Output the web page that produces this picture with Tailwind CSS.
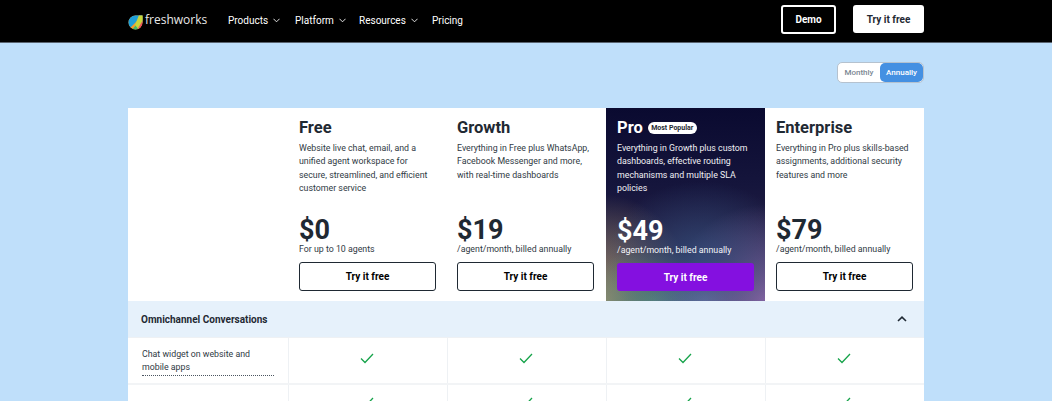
<!DOCTYPE html>
<html lang="en">
<head>
    <meta charset="UTF-8">
    <meta name="viewport" content="width=device-width, initial-scale=1.0">
    <title>Freshchat Pricing</title>
    <script src="https://cdn.jsdelivr.net/npm/@tailwindcss/browser@4"></script>
</head>
<body class="bg-[#bfdffa] font-['Roboto',sans-serif] h-[401px] overflow-hidden text-[#1f2933]">

    <!-- Header -->
    <header class="bg-black h-[43px] pl-[128px] pr-[128px] flex items-center border-b border-[#5a6470]">
        <div class="flex items-center w-[100px]">
            <svg width="15" height="15" viewBox="0 0 15 15" class="mt-[3px]">
                <defs><clipPath id="leaf"><path d="M7.5 0.5H14.5V7.5A7 7 0 0 1 7.5 14.5A7 7 0 0 1 0.5 7.5A7 7 0 0 1 7.5 0.5Z"/></clipPath></defs>
                <g clip-path="url(#leaf)">
                    <rect width="15" height="15" fill="#f59e2c"/>
                    <path d="M0 0H15L0 15Z" fill="#1f9fd8"/>
                    <path d="M4 15L15 1V7L9 15Z" fill="#3fb56b"/>
                    <path d="M11 15L15 5V0H11L7 10Z" fill="#c8d63a"/>
                    <path d="M12 15L15 9V5L9 15Z" fill="#ec4f5f"/>
                </g>
            </svg>
            <span class="font-['Open_Sans',sans-serif] text-[#e8e8e8] text-[12px] leading-none ml-[2px] mt-[-2px]">freshworks</span>
        </div>
        <nav class="flex items-center text-white text-[10px] mt-[-2px]">
            <span class="flex items-center gap-[5px] w-[67px]">Products
                <svg width="7" height="5" viewBox="0 0 8 5" fill="none" stroke="#fff" stroke-width="1"><path d="M0.5 0.5L4 4L7.5 0.5"/></svg>
            </span>
            <span class="flex items-center gap-[5px] w-[64px]">Platform
                <svg width="7" height="5" viewBox="0 0 8 5" fill="none" stroke="#fff" stroke-width="1"><path d="M0.5 0.5L4 4L7.5 0.5"/></svg>
            </span>
            <span class="flex items-center gap-[5px] w-[73px]">Resources
                <svg width="7" height="5" viewBox="0 0 8 5" fill="none" stroke="#fff" stroke-width="1"><path d="M0.5 0.5L4 4L7.5 0.5"/></svg>
            </span>
            <span>Pricing</span>
        </nav>
        <div class="ml-auto flex items-center gap-[17px] mt-[-4px]">
            <button class="w-[55px] h-[29px] rounded-[3px] border-2 border-white text-white text-[10px] font-bold">Demo</button>
            <button class="w-[71px] h-[28px] rounded-[3px] bg-white text-[#1f2933] text-[10px] font-bold">Try it free</button>
        </div>
    </header>

    <main class="px-[128px]">
        <!-- Billing toggle -->
        <div class="h-[65px] flex justify-end items-start pt-[19px]">
            <div class="flex h-[21px] w-[87px] rounded-[5px] bg-white border border-[#b5c2cf] text-[8px] font-medium">
                <span class="w-[42px] flex items-center justify-center text-[#7b8793]">Monthly</span>
                <span class="flex-1 flex items-center justify-center bg-[#4490e2] text-white rounded-[5px]">Annually</span>
            </div>
        </div>

        <!-- Plans -->
        <section class="grid grid-cols-[160px_159px_159px_159px_159px] bg-white">
            <div></div>

            <div class="h-[193px] pl-[11px] pr-[10px] flex flex-col">
                <h2 class="text-[16.5px] font-bold leading-[20px] mt-[10px]">Free</h2>
                <p class="text-[8.8px] leading-[13.33px] mt-[4px] h-[53px] text-[#2f3a44]">Website live chat, email, and a<br>unified agent workspace for<br>secure, streamlined, and efficient<br>customer service</p>
                <div class="text-[27px] font-bold leading-[30px] mt-[20px]">$0</div>
                <p class="text-[8.8px] leading-[12px] mt-[-2px] text-[#2f3a44]">For up to 10 agents</p>
                <button class="mt-[7px] h-[29px] w-[137px] rounded-[3px] border border-[#1f2933] text-[10px] font-bold text-black">Try it free</button>
            </div>

            <div class="h-[193px] pl-[10px] pr-[10px] flex flex-col">
                <h2 class="text-[16.5px] font-bold leading-[20px] mt-[10px]">Growth</h2>
                <p class="text-[8.8px] leading-[13.33px] mt-[4px] h-[53px] text-[#2f3a44]">Everything in Free plus WhatsApp,<br>Facebook Messenger and more,<br>with real-time dashboards</p>
                <div class="text-[27px] font-bold leading-[30px] mt-[20px]">$19</div>
                <p class="text-[8.8px] leading-[12px] mt-[-2px] text-[#2f3a44]">/agent/month, billed annually</p>
                <button class="mt-[7px] h-[29px] w-[137px] rounded-[3px] border border-[#1f2933] text-[10px] font-bold text-black">Try it free</button>
            </div>

            <!-- Most popular -->
            <div class="h-[193px] pl-[11px] pr-[11px] flex flex-col text-white bg-[radial-gradient(ellipse_60%_40%_at_60%_78%,#34507ecc_0%,transparent_100%),radial-gradient(ellipse_60%_50%_at_100%_100%,#8a65a5_0%,transparent_100%),radial-gradient(ellipse_35%_22%_at_62%_100%,#5f7fa5_0%,transparent_100%),radial-gradient(ellipse_45%_28%_at_30%_100%,#5a8a7a_0%,transparent_100%),radial-gradient(ellipse_55%_55%_at_0%_100%,#9a8a6c_0%,transparent_100%),linear-gradient(180deg,#0a0a30_0%,#15153c_40%,#34294c_100%)]">
                <div class="flex items-center mt-[10px] h-[20px]">
                    <h2 class="text-[16.5px] font-bold leading-[20px]">Pro</h2>
                    <span class="ml-[5px] bg-white text-[#1f2933] rounded-full text-[7px] font-bold h-[12px] w-[49px] flex items-center justify-center">Most Popular</span>
                </div>
                <p class="text-[8.8px] leading-[13.33px] mt-[4px] h-[53px] text-[#f0f0f4]">Everything in Growth plus custom<br>dashboards, effective routing<br>mechanisms and multiple SLA<br>policies</p>
                <div class="text-[27px] font-bold leading-[30px] mt-[21px]">$49</div>
                <p class="text-[8.8px] leading-[12px] mt-[-2px] text-[#f4f4f8]">/agent/month, billed annually</p>
                <button class="mt-[7px] h-[28px] w-[137px] rounded-[3px] bg-[#8410e0] text-[10px] font-bold text-white">Try it free</button>
            </div>

            <div class="h-[193px] pl-[11px] pr-[11px] flex flex-col">
                <h2 class="text-[16.5px] font-bold leading-[20px] mt-[10px]">Enterprise</h2>
                <p class="text-[8.8px] leading-[13.33px] mt-[4px] h-[53px] text-[#2f3a44]">Everything in Pro plus skills-based<br>assignments, additional security<br>features and more</p>
                <div class="text-[27px] font-bold leading-[30px] mt-[20px]">$79</div>
                <p class="text-[8.8px] leading-[12px] mt-[-2px] text-[#2f3a44]">/agent/month, billed annually</p>
                <button class="mt-[7px] h-[29px] w-[137px] rounded-[3px] border border-[#1f2933] text-[10px] font-bold text-black">Try it free</button>
            </div>
        </section>

        <!-- Omnichannel Conversations -->
        <div class="h-[37px] bg-[#e6f1fb] flex items-center justify-between pl-[13px] pr-[17px] text-[10px] font-bold border-b border-[#eef1f4]">
            <span>Omnichannel Conversations</span>
            <svg width="10" height="6" viewBox="0 0 10 6" fill="none" stroke="#1f2933" stroke-width="1.6"><path d="M1 5L5 1.2L9 5"/></svg>
        </div>

        <div class="grid grid-cols-[160px_159px_159px_159px_159px] bg-white h-[47px] border-b-2 border-[#f2f4f6]">
            <div class="pl-[14px] pt-[10px]">
                <span class="block w-[132px] text-[8.8px] leading-[13.33px] text-[#2f3a44] border-b border-dotted border-[#4a5560]">Chat widget on website and mobile apps</span>
            </div>
            <div class="flex justify-center pt-[15px] pr-[2px] border-l border-[#eef1f4]">
                <svg width="14" height="11" viewBox="0 0 14 11" fill="none" stroke="#16a34a" stroke-width="1.3"><path d="M1 5.5L5 9.5L13 1"/></svg>
            </div>
            <div class="flex justify-center pt-[15px] pr-[2px] border-l border-[#eef1f4]">
                <svg width="14" height="11" viewBox="0 0 14 11" fill="none" stroke="#16a34a" stroke-width="1.3"><path d="M1 5.5L5 9.5L13 1"/></svg>
            </div>
            <div class="flex justify-center pt-[15px] pr-[2px] border-l border-[#eef1f4]">
                <svg width="14" height="11" viewBox="0 0 14 11" fill="none" stroke="#16a34a" stroke-width="1.3"><path d="M1 5.5L5 9.5L13 1"/></svg>
            </div>
            <div class="flex justify-center pt-[15px] pr-[2px] border-l border-[#eef1f4]">
                <svg width="14" height="11" viewBox="0 0 14 11" fill="none" stroke="#16a34a" stroke-width="1.3"><path d="M1 5.5L5 9.5L13 1"/></svg>
            </div>
        </div>

        <div class="grid grid-cols-[160px_159px_159px_159px_159px] bg-white h-[16px] overflow-hidden">
            <div></div>
            <div class="flex justify-center pt-[12px] pr-[2px] border-l border-[#eef1f4]">
                <svg width="14" height="11" viewBox="0 0 14 11" fill="none" stroke="#16a34a" stroke-width="1.3"><path d="M1 5.5L5 9.5L13 1"/></svg>
            </div>
            <div class="flex justify-center pt-[12px] pr-[2px] border-l border-[#eef1f4]">
                <svg width="14" height="11" viewBox="0 0 14 11" fill="none" stroke="#16a34a" stroke-width="1.3"><path d="M1 5.5L5 9.5L13 1"/></svg>
            </div>
            <div class="flex justify-center pt-[12px] pr-[2px] border-l border-[#eef1f4]">
                <svg width="14" height="11" viewBox="0 0 14 11" fill="none" stroke="#16a34a" stroke-width="1.3"><path d="M1 5.5L5 9.5L13 1"/></svg>
            </div>
            <div class="flex justify-center pt-[12px] pr-[2px] border-l border-[#eef1f4]">
                <svg width="14" height="11" viewBox="0 0 14 11" fill="none" stroke="#16a34a" stroke-width="1.3"><path d="M1 5.5L5 9.5L13 1"/></svg>
            </div>
        </div>
    </main>
</body>
</html>
